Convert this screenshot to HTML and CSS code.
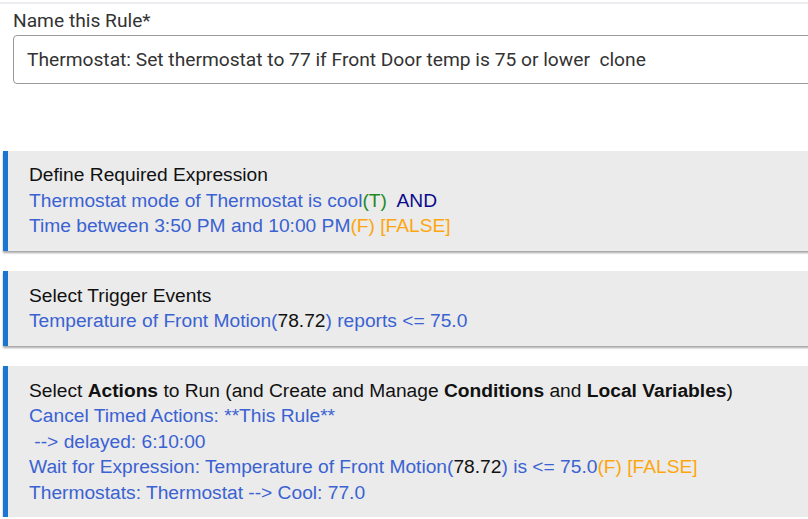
FILE: index.html
```html
<!DOCTYPE html>
<html lang="en">
<head>
  <meta charset="UTF-8" />
  <meta name="viewport" content="width=device-width, initial-scale=1.0"/>
  <title>Rule Machine</title>
  <link rel="stylesheet" href="styles.css">
</head>
<body>

<div class="topline"></div>

<div class="name-field">
  <label for="ruleName">Name this Rule*</label>
  <input type="text" id="ruleName" value="Thermostat: Set thermostat to 77 if Front Door temp is 75 or lower  clone">
</div>

<section class="card first">
  <div class="title">Define Required Expression</div>
  <div class="blue">Thermostat mode of Thermostat is cool<span class="green">(T)</span>&nbsp; <span class="navy">AND</span></div>
  <div class="blue">Time between 3:50 PM and 10:00 PM<span class="orange">(F) [FALSE]</span></div>
</section>

<section class="card">
  <div class="title">Select Trigger Events</div>
  <div class="blue">Temperature of Front Motion(<span class="black">78.72</span>) reports &lt;= 75.0</div>
</section>

<section class="card">
  <div class="title">Select <b>Actions</b> to Run (and Create and Manage <b>Conditions</b> and <b>Local Variables</b>)</div>
  <div class="blue">Cancel Timed Actions: **This Rule**</div>
  <div class="blue">&nbsp;--&gt; delayed: 6:10:00</div>
  <div class="blue">Wait for Expression: Temperature of Front Motion(<span class="black">78.72</span>) is &lt;= 75.0<span class="orange">(F) [FALSE]</span></div>
  <div class="blue">Thermostats: Thermostat --&gt; Cool: 77.0</div>
</section>

</body>
</html>
```

FILE: styles.css
```css
body {
  margin: 0;
  padding: 0;
  background: #fff;
  font-family: "Liberation Sans", Arial, sans-serif;
  overflow: hidden;
  width: 840px;
}
.topline {
  height: 2px;
  margin-top: 2px;
  background: #ececf1;
}
.name-field {
  padding: 6px 0 0 13px;
  font-family: Roboto, sans-serif;
}
.name-field label {
  display: block;
  font-size: 19.2px;
  color: #333;
  line-height: 22px;
}
.name-field input {
  display: block;
  box-sizing: border-box;
  width: 830px;
  height: 49px;
  margin-top: 3px;
  padding: 0 13px;
  border: 1px solid #9a9a9a;
  border-radius: 4px;
  font-family: Roboto, sans-serif;
  font-size: 19.2px;
  color: #333;
  outline: none;
}
.card {
  margin: 20px 0 0 3px;
  padding: 12px 0 12px 21px;
  background: #ebebeb;
  border-left: 5px solid #1a76d2;
  box-shadow: 0 2px 2px rgba(0, 0, 0, 0.35);
  font-size: 19.2px;
  line-height: 25.5px;
  color: #111;
  white-space: nowrap;
}
.card.first {
  margin-top: 67px;
  padding-top: 11px;
}
.blue {
  color: #3a62d2;
}
.green {
  color: #1f8a1f;
}
.navy {
  color: #0a0a8c;
}
.orange {
  color: #fda60f;
}
.black {
  color: #111;
}
```
